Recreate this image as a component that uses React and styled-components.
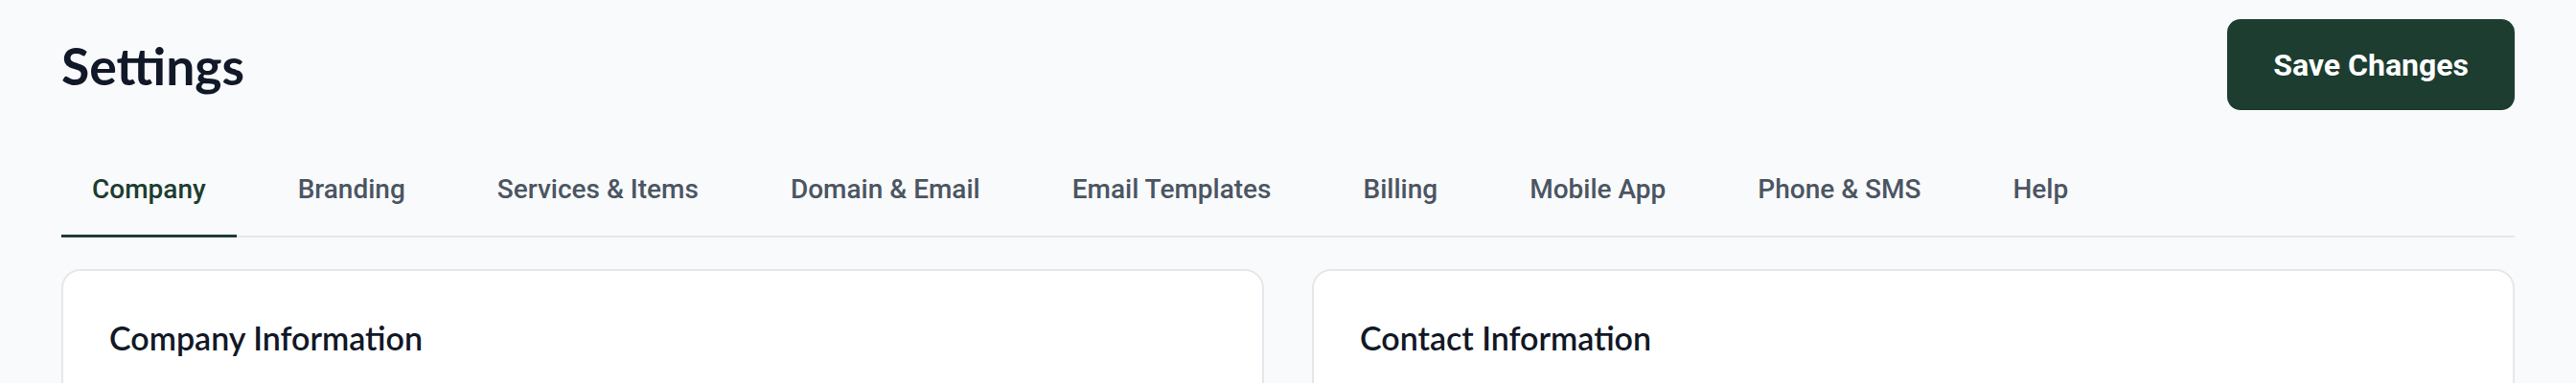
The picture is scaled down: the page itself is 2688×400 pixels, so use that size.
import React, { useState } from "react";
import styled, { createGlobalStyle } from "styled-components";

const GlobalStyle = createGlobalStyle`
  html, body {
    margin: 0;
    padding: 0;
    background: #f9fafb;
  }
  * {
    box-sizing: border-box;
  }
`;

const Page = styled.div`
  padding: 20px 64px 0;
  font-family: Roboto, "Liberation Sans", sans-serif;
`;

const Header = styled.div`
  display: flex;
  align-items: center;
  justify-content: space-between;
`;

const Title = styled.h1`
  margin: 0;
  font-family: Lato, "Noto Sans", sans-serif;
  font-weight: 700;
  font-size: 53.5px;
  color: #111827;
`;

const SaveButton = styled.button`
  height: 95px;
  padding: 0 48px;
  border: none;
  border-radius: 14px;
  background: #1c3d30;
  color: #ffffff;
  font-family: Roboto, "Liberation Sans", sans-serif;
  font-weight: 700;
  font-size: 32px;
  cursor: pointer;
`;

const Tabs = styled.div`
  display: flex;
  gap: 32px;
  margin-top: 34px;
  border-bottom: 2px solid #e5e7eb;
`;

const Tab = styled.button`
  padding: 28px 32px 27px;
  margin-bottom: -2px;
  border: none;
  border-bottom: 3px solid ${(p) => (p.$active ? "#1c3d30" : "transparent")};
  background: none;
  font-family: Roboto, "Liberation Sans", sans-serif;
  font-weight: 500;
  font-size: 28px;
  line-height: 41px;
  color: ${(p) => (p.$active ? "#1c3d30" : "#4b5563")};
  cursor: pointer;
`;

const Cards = styled.div`
  display: grid;
  grid-template-columns: 1fr 1fr;
  gap: 50px;
  margin-top: 33px;
`;

const Card = styled.div`
  background: #ffffff;
  border: 2px solid #e5e7eb;
  border-radius: 20px;
  padding: 50px 48px;
  min-height: 200px;
`;

const CardTitle = styled.h2`
  margin: 0;
  font-family: Lato, "Noto Sans", sans-serif;
  font-weight: 600;
  font-size: 34px;
  line-height: 40px;
  color: #111827;
`;

const tabs = [
  "Company",
  "Branding",
  "Services & Items",
  "Domain & Email",
  "Email Templates",
  "Billing",
  "Mobile App",
  "Phone & SMS",
  "Help",
];

const App = () => {
  const [active, setActive] = useState("Company");
  return (
    <>
      <GlobalStyle />
      <Page>
        <Header>
          <Title>Settings</Title>
          <SaveButton>Save Changes</SaveButton>
        </Header>
        <Tabs>
          {tabs.map((t) => (
            <Tab key={t} $active={t === active} onClick={() => setActive(t)}>
              {t}
            </Tab>
          ))}
        </Tabs>
        <Cards>
          <Card>
            <CardTitle>Company Information</CardTitle>
          </Card>
          <Card>
            <CardTitle>Contact Information</CardTitle>
          </Card>
        </Cards>
      </Page>
    </>
  );
};

export default App;
